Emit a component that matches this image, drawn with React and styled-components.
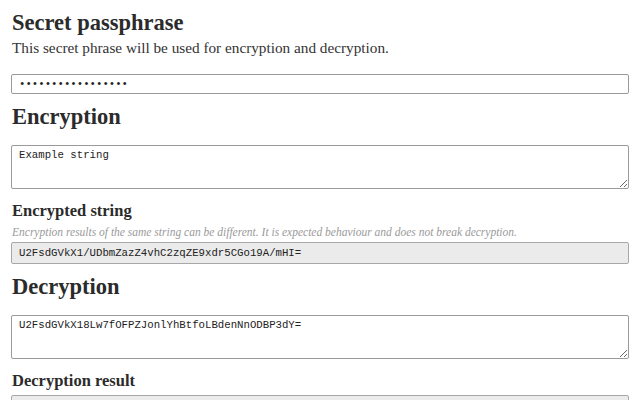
import React from "react";
import styled, { createGlobalStyle } from "styled-components";

const GlobalStyle = createGlobalStyle`
  html, body {
    margin: 0;
    background: #ffffff;
  }
  body {
    font-family: "Liberation Serif", serif;
    color: #333333;
  }
`;

const App = () => {
  return (
    <>
      <GlobalStyle />
      <Page>
        <Section>
          <Title>Secret passphrase</Title>
          <Lead>This secret phrase will be used for encryption and decryption.</Lead>
          <PassInput type="password" defaultValue="abcdefghijklmnopq" />
        </Section>

        <Section>
          <Title>Encryption</Title>
          <Area defaultValue="Example string" />
          <SubTitle>Encrypted string</SubTitle>
          <Note>
            Encryption results of the same string can be different. It is expected behaviour and does not break decryption.
          </Note>
          <Output>U2FsdGVkX1/UDbmZazZ4vhC2zqZE9xdr5CGo19A/mHI=</Output>
        </Section>

        <Section>
          <Title>Decryption</Title>
          <Area defaultValue="U2FsdGVkX18Lw7fOFPZJonlYhBtfoLBdenNnODBP3dY=" />
          <SubTitle>Decryption result</SubTitle>
          <Output $gap={4}>Example string</Output>
        </Section>
      </Page>
    </>
  );
};

const Page = styled.div`
  padding: 10px 11px 20px 11px;
  display: flex;
  flex-direction: column;
`;

const Section = styled.section`
  display: flex;
  flex-direction: column;
`;

const Title = styled.h2`
  margin: 0 0 0 1px;
  font-size: 22.5px;
  line-height: 26px;
  font-weight: 700;
  color: #2b2b2b;
`;

const SubTitle = styled.h3`
  margin: 12px 0 0 1px;
  font-size: 16.5px;
  line-height: 20px;
  font-weight: 700;
  color: #2b2b2b;
`;

const Lead = styled.p`
  margin: 2px 0 16px 1px;
  font-size: 15.25px;
  line-height: 20px;
`;

const Note = styled.p`
  margin: 4px 0 3px 1px;
  font-size: 11.5px;
  line-height: 14px;
  font-style: italic;
  color: #9a9a9a;
`;

const fieldBase = `
  box-sizing: border-box;
  width: 100%;
  border: 1px solid #9a9a9a;
  border-radius: 2px;
  font-family: "Liberation Mono", monospace;
  font-size: 10.7px;
  color: #222222;
  padding: 0 7px;
  margin: 0;
`;

const PassInput = styled.input`
  ${fieldBase}
  height: 20px;
  margin-bottom: 10px;
`;

const Area = styled.textarea`
  ${fieldBase}
  display: block;
  height: 44px;
  padding-top: 3px;
  margin-top: 15px;
  resize: vertical;
`;

const Output = styled.div`
  ${fieldBase}
  height: 22px;
  line-height: 20px;
  background: #ebebeb;
  border-color: #a8a8a8;
  margin-top: ${(p) => p.$gap || 0}px;
  margin-bottom: 10px;
`;

export default App;
